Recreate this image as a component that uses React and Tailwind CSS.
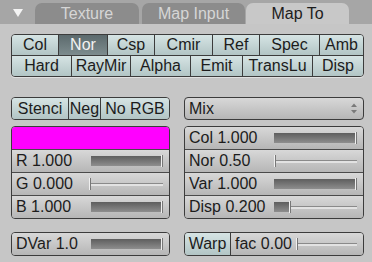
import React from 'react';

const toggleOff = 'bg-linear-to-b from-[#d6e4e4] to-[#b2c5c5] text-[#1c1c1c]';
const toggleOn = 'bg-linear-to-b from-[#5c6a6d] to-[#7d8c8e] text-[#f2f2f2]';
const greyBtn = 'bg-linear-to-b from-[#d8d8d8] to-[#b6b6b6] text-[#1c1c1c]';

function ToggleRow({ items, active }) {
  return (
    <div className="flex h-[20px]">
      {items.map(([label, w], i) => (
        <div
          key={label}
          style={{ width: w }}
          className={`flex items-center justify-center leading-none ${i > 0 ? 'border-l border-[#3c3c3c]' : ''} ${label === active ? toggleOn : toggleOff}`}
        >
          {label}
        </div>
      ))}
    </div>
  );
}

function Slider({ label, value, labelW, first }) {
  return (
    <div className={`flex items-center ${greyBtn} ${first ? 'h-[22px]' : 'h-[23px] border-t border-[#4a4a4a]'}`}>
      <span style={{ width: labelW }} className="shrink-0 pl-[4px] leading-none whitespace-nowrap">{label}</span>
      <div className="relative flex-1 mr-[6px] h-[12px] flex items-center">
        {/* unfilled track */}
        <div className="w-full h-[3px] border-t border-[#8a8a8a] bg-[#e2e2e2]" />
        {/* filled part */}
        <div
          className="absolute left-0 top-[1px] h-[10px] bg-linear-to-b from-[#5e5e5e] to-[#8e8e8e]"
          style={{ width: `${value * 100}%` }}
        />
        {/* knob */}
        <div
          className="absolute top-0 h-[12px] w-[2px] bg-[#f0f0f0] border-r border-[#777]"
          style={{ left: `calc(${value * 100}% - 2px)` }}
        />
      </div>
    </div>
  );
}

function Tab({ label, active, w }) {
  return (
    <div
      style={{ width: w }}
      className={`h-[21px] rounded-t-[7px] flex items-center justify-center leading-none ${active ? 'bg-[#c8c8c8] text-[#1c1c1c]' : 'bg-[#8c8c8c] text-[#d6d6d6]'}`}
    >
      {label}
    </div>
  );
}

export default function App() {
  return (
    <div
      className="w-[372px] h-[262px] bg-[#c6c6c6] text-[16px] overflow-hidden"
      style={{ fontFamily: '"Liberation Sans", Arial, sans-serif' }}
    >
      {/* tab strip */}
      <div className="h-[24px] bg-[#a6a6a6] flex items-end">
        <svg width="10" height="9" viewBox="0 0 10 9" className="ml-[13px] mb-[6px]">
          <polygon points="0,0 10,0 5,8" fill="#f4f4f4" />
        </svg>
        <div className="ml-[12px] flex gap-[3px]">
          <Tab label="Texture" w={104} />
          <Tab label="Map Input" w={103} />
        </div>
        <div className="ml-[1px]">
          <Tab label="Map To" w={103} active />
        </div>
      </div>

      <div className="pl-[11px] pr-[8px]">
        {/* map-to channels */}
        <div className="mt-[10px] border border-[#3c3c3c] rounded-[4px] overflow-hidden shadow-[0_1px_0_#e0e0e0]">
          <ToggleRow
            active="Nor"
            items={[['Col', 46], ['Nor', 49], ['Csp', 47], ['Cmir', 58], ['Ref', 47], ['Spec', 60], ['Amb', 44]]}
          />
          <div className="border-t border-[#3c3c3c]">
            <ToggleRow
              items={[['Hard', 59], ['RayMir', 59], ['Alpha', 60], ['Emit', 52], ['TransLu', 70], ['Disp', 51]]}
            />
          </div>
        </div>

        <div className="mt-[20px] flex gap-[14px]">
          {/* left column */}
          <div className="w-[159px] flex flex-col">
            <div className="h-[23px] flex border border-[#3c3c3c] rounded-[4px] overflow-hidden">
              <div className={`w-[56px] flex items-center justify-center leading-none ${toggleOff}`}>Stenci</div>
              <div className={`w-[32px] flex items-center justify-center leading-none border-l border-[#3c3c3c] ${toggleOff}`}>Neg</div>
              <div className={`flex-1 flex items-center justify-center leading-none border-l border-[#3c3c3c] ${toggleOff}`}>No RGB</div>
            </div>
            <div className="mt-[6px] border border-[#3c3c3c] rounded-[4px] overflow-hidden">
              <div className="h-[22px] bg-[#ff00ff]" />
              <Slider label="R 1.000" value={1} labelW={79} />
              <Slider label="G 0.000" value={0} labelW={79} />
              <Slider label="B 1.000" value={1} labelW={79} />
            </div>
            <div className="mt-[13px] border border-[#3c3c3c] rounded-[4px] overflow-hidden">
              <Slider label="DVar 1.0" value={1} labelW={79} first />
            </div>
          </div>

          {/* right column */}
          <div className="flex-1 flex flex-col">
            <div className={`h-[23px] flex items-center justify-between border border-[#3c3c3c] rounded-[4px] ${greyBtn}`}>
              <span className="pl-[4px] leading-none">Mix</span>
              <svg width="8" height="11" viewBox="0 0 8 11" className="mr-[5px]">
                <polygon points="4,0.5 7,4 1,4" fill="#7a7a7a" />
                <polygon points="4,10.5 7,7 1,7" fill="#7a7a7a" />
              </svg>
            </div>
            <div className="mt-[6px] border border-[#3c3c3c] rounded-[4px] overflow-hidden">
              <Slider label="Col 1.000" value={1} labelW={89} first />
              <Slider label="Nor 0.50" value={0.02} labelW={89} />
              <Slider label="Var 1.000" value={1} labelW={89} />
              <Slider label="Disp 0.200" value={0.2} labelW={89} />
            </div>
            <div className="mt-[13px] flex border border-[#3c3c3c] rounded-[4px] overflow-hidden">
              <div className={`w-[45px] h-[22px] shrink-0 flex items-center justify-center leading-none ${toggleOff}`}>Warp</div>
              <div className="flex-1 border-l border-[#3c3c3c]">
                <Slider label="fac 0.00" value={0} labelW={67} first />
              </div>
            </div>
          </div>
        </div>
      </div>
    </div>
  );
}
